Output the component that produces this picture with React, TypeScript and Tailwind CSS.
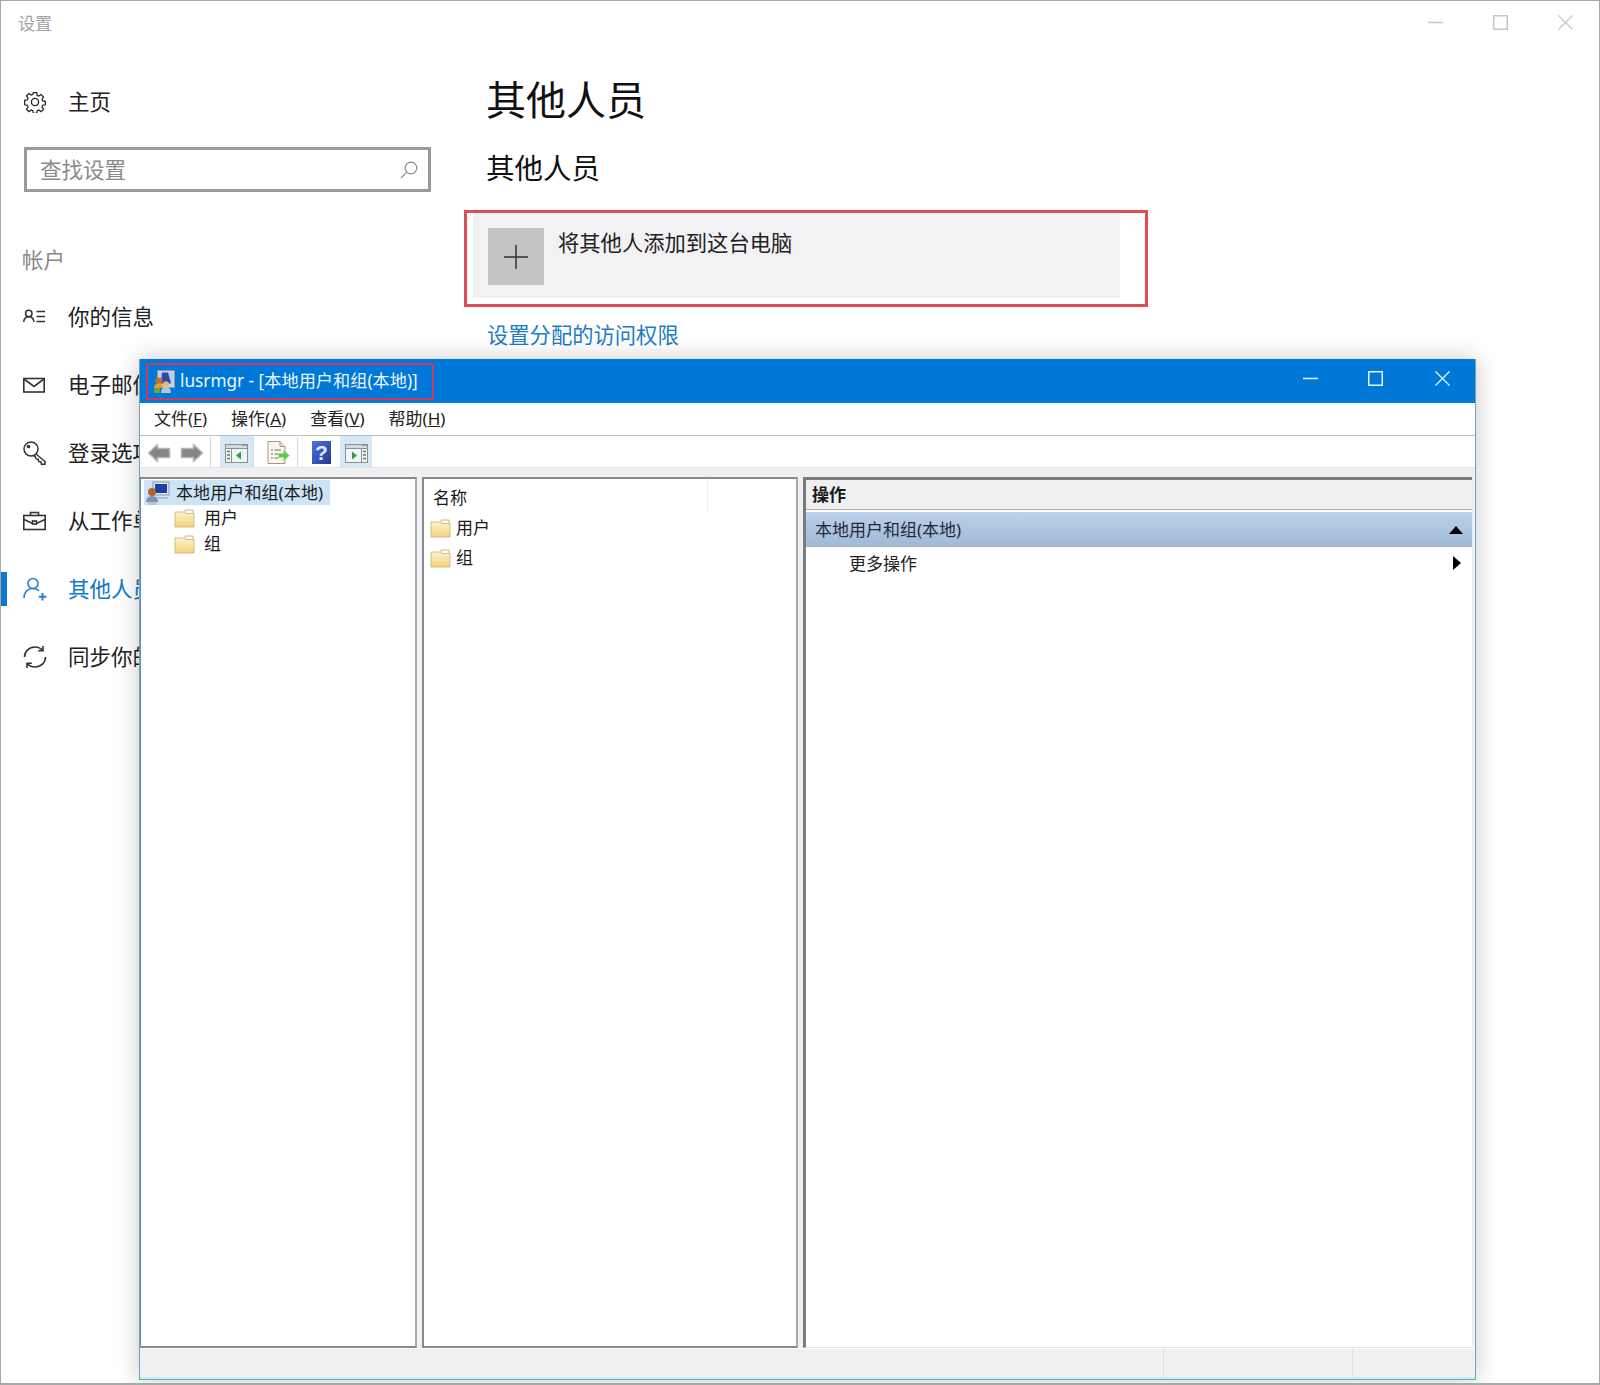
import React from "react";

const S = { fill: "none", stroke: "currentColor", strokeWidth: 1.5 } as const;

function Gear() {
  return (
    <svg width="22" height="22" viewBox="0 0 22 22" {...S} strokeWidth={1.3}>
      <circle cx="11" cy="11" r="3.6" />
      <path d="M9.2 1.2h3.6l.5 2.9 1.7.7 2.4-1.7 2.6 2.6-1.7 2.4.7 1.7 2.9.5v3.6l-2.9.5-.7 1.7 1.7 2.4-2.6 2.6-2.4-1.7-1.7.7-.5 2.9H9.2l-.5-2.9-1.7-.7-2.4 1.7-2.6-2.6 1.7-2.4-.7-1.7-2.9-.5V9.2l2.9-.5.7-1.7-1.7-2.4 2.6-2.6L7 3.700l1.700-.7z" transform="translate(0.55 0.55) scale(0.95)" />
    </svg>
  );
}
function PersonList() {
  return (
    <svg width="22" height="22" viewBox="0 0 22 22" {...S}>
      <circle cx="5.800" cy="7.500" r="3.200" />
      <path d="M.7 16c.3-3.600 2.300-5.300 5.100-5.300s4.800 1.700 5.100 5.300" />
      <path d="M13.500 5.500H22M13.500 10.500H22M13.500 15.500H22" />
    </svg>
  );
}
function Mail() {
  return (
    <svg width="22" height="22" viewBox="0 0 22 22" {...S} strokeWidth={1.6}>
      <rect x="0.800" y="4.500" width="20.400" height="13.500" />
      <path d="M1 5l10 7.500L21 5" />
    </svg>
  );
}
function Key() {
  return (
    <svg width="23" height="24" viewBox="0 0 23 24" {...S}>
      <circle cx="8" cy="8" r="7" />
      <circle cx="5.500" cy="5.500" r="1.100" />
      <path d="M13 13l9 7.500v2.700h-3.500l-.7-2.400-2.200-.3-.4-2.300-2.200-.3-1-2.700-1.500-.2" />
    </svg>
  );
}
function Briefcase() {
  return (
    <svg width="23" height="22" viewBox="0 0 23 22" {...S} strokeWidth={1.6}>
      <rect x="0.800" y="5.500" width="21.400" height="14" />
      <path d="M7.500 5.500V2.500h8v3M1 9.500l7.500 3.500h6L22 9.500" />
      <rect x="9.500" y="11" width="4" height="3" fill="#fff" />
    </svg>
  );
}
function PersonPlus() {
  return (
    <svg width="24" height="24" viewBox="0 0 24 24" {...S} strokeWidth={1.6}>
      <circle cx="10" cy="6.500" r="5" />
      <path d="M1 21c.3-6.200 3.800-9.500 9-9.500 2.500 0 4.500.8 6 2.200" />
      <path d="M19.500 16v7.500M15.800 19.700h7.500" strokeWidth={2} />
    </svg>
  );
}
function Sync() {
  return (
    <svg width="24" height="24" viewBox="0 0 24 24" {...S} strokeWidth={1.6}>
      <path d="M1.500 12C1.500 6.200 6.200 2 12 2c3 0 5.700 1.100 7.600 3.300" />
      <path d="M22.500 12c0 5.800-4.700 10-10.500 10-3 0-5.700-1.100-7.600-3.300" />
      <path d="M20 1v4.800h-4.800M4 23v-4.800h4.800" />
    </svg>
  );
}
function SearchIcon() {
  return (
    <svg width="18" height="18" viewBox="0 0 18 18" {...S} strokeWidth={1.2}>
      <circle cx="11" cy="7" r="5.800" />
      <path d="M6.800 11.200L1 17" />
    </svg>
  );
}
function Controls({ light }: { light: boolean }) {
  const c = light ? "text-[#e6f2fc]" : "text-[#c6c6c6]";
  return (
    <>
      <svg width="15" height="15" viewBox="0 0 15 15" className={c} {...S}>
        <path d="M0 7.500h15" />
      </svg>
      <svg width="15" height="15" viewBox="0 0 15 15" className={c} {...S}>
        <rect x="0.750" y="0.750" width="13.500" height="13.500" />
      </svg>
      <svg width="15" height="15" viewBox="0 0 15 15" className={light ? c + " ml-[2px]" : c} {...S} strokeWidth={1.3}>
        <path d="M0.500 0.500l14 14M14.500 0.500l-14 14" />
      </svg>
    </>
  );
}

function Folder() {
  return (
    <svg width="21" height="19" viewBox="0 0 21 19" className="shrink-0">
      <defs>
        <linearGradient id="fold" x1="0" y1="0" x2="0" y2="1">
          <stop offset="0" stopColor="#fdf3cf" />
          <stop offset="1" stopColor="#f3d27c" />
        </linearGradient>
      </defs>
      <path d="M11 1h8v5h-8z" fill="#fff" stroke="#b9a46c" strokeWidth="0.800" />
      <path d="M1 3h9.500L12 4.500h8V18H1z" fill="url(#fold)" stroke="#cdb06a" strokeWidth="0.800" />
    </svg>
  );
}
function TitleIcon() {
  return (
    <svg width="22" height="24" viewBox="0 0 22 24">
      <rect x="4.500" y="0.500" width="17" height="17" fill="#c9d4e4" stroke="#8e97a6" />
      <rect x="6.500" y="2.500" width="13" height="11" fill="#b9cbe6" />
      <path d="M9 2.500h6l3 11H8z" fill="#2c4cab" />
      <circle cx="6" cy="11" r="3.600" fill="#c66f2c" />
      <path d="M1 18c0-3 2-4.500 5-4.500s4 1.500 4 4.500z" fill="#d9a03a" />
      <circle cx="13" cy="14" r="2.800" fill="#e3b67a" />
      <path d="M8 23c0-4 2-6 5-6s5 2 5 6z" fill="#b9c3d2" />
      <path d="M1 18h6v5H1z" fill="#69a545" />
    </svg>
  );
}
function TreeIcon() {
  return (
    <svg width="24" height="24" viewBox="0 0 24 24" className="shrink-0">
      <rect x="7" y="1" width="16" height="13" fill="#dfe5ee" stroke="#8e97a6" />
      <rect x="9" y="3" width="12" height="9" fill="#1d3fa8" />
      <path d="M6 16h16v2H6z" fill="#b7bec9" />
      <circle cx="6" cy="11" r="4" fill="#b5652c" />
      <path d="M0 21c0-4 2.500-6 6-6s6 2 6 6z" fill="#7c93b3" />
      <path d="M2 21h9v3H2z" fill="#b7c2d2" />
    </svg>
  );
}
function Arrow({ flip }: { flip?: boolean }) {
  return (
    <svg width="24" height="20" viewBox="0 0 24 20" className={flip ? "-scale-x-100" : ""}>
      <path d="M1.500 10L10.500 1.500v4h12v9h-12v4z" fill="#858585" stroke="#b5b5b5" strokeWidth="1.600" strokeLinejoin="round" />
    </svg>
  );
}
function PaneIcon({ right }: { right?: boolean }) {
  return (
    <svg width="23" height="19" viewBox="0 0 23 19">
      <rect x="0.500" y="0.500" width="22" height="18" fill="#eef5f2" stroke="#8d9092" />
      <rect x="1" y="1" width="21" height="3.500" fill="#d5dadd" />
      <path d="M1 4.500h21" stroke="#8d9092" />
      <path d="M17.500 1.500h1.500M20 1.500h1.500" stroke="#777" strokeWidth="1" />
      {right ? (
        <>
          <path d="M16.500 5v13" stroke="#8d9092" />
          <path d="M18 7.500h3M18 11h3M18 14.500h3" stroke="#6f7477" strokeWidth="1.500" />
          <path d="M7 7.500l5 4-5 4z" fill="#2f9e44" />
        </>
      ) : (
        <>
          <path d="M6.500 5v13" stroke="#8d9092" />
          <path d="M2 7.500h3M2 11h3M2 14.500h3" stroke="#6f7477" strokeWidth="1.500" />
          <path d="M16 7.500l-5 4 5 4z" fill="#2f9e44" />
        </>
      )}
    </svg>
  );
}
function ExportIcon() {
  return (
    <svg width="23" height="23" viewBox="0 0 23 23">
      <path d="M1 .5h12l5 5v17H1z" fill="#fbf7ea" stroke="#a39a80" />
      <path d="M13 .5v5h5" fill="#e6dfc5" stroke="#a39a80" />
      <path d="M4 9h2M7.500 9H14M4 13h2M7.500 13H11M4 17h2M7.500 17H11" stroke="#6b6b6b" strokeWidth="1.200" />
      <path d="M11.500 12.500h5V9.500l6 5-6 5v-3h-5z" fill="#62c94e" stroke="#a3e08f" strokeWidth="0.600" />
    </svg>
  );
}
function HelpIcon() {
  return (
    <svg width="19" height="23" viewBox="0 0 19 23">
      <defs>
        <linearGradient id="hlp" x1="0" y1="0" x2="1" y2="1">
          <stop offset="0" stopColor="#4f74dc" />
          <stop offset="1" stopColor="#1f3690" />
        </linearGradient>
      </defs>
      <rect width="19" height="23" fill="url(#hlp)" />
      <text x="9.500" y="19" textAnchor="middle" fontSize="21" fontWeight="700" fill="#dfe6ff" fontFamily="Liberation Sans, sans-serif">?</text>
    </svg>
  );
}

const items: [React.ReactNode, string, boolean][] = [
  [<PersonList />, "你的信息", false],
  [<Mail />, "电子邮件和帐户", false],
  [<Key />, "登录选项", false],
  [<Briefcase />, "从工作单位或学校", false],
  [<PersonPlus />, "其他人员", true],
  [<Sync />, "同步你的设置", false],
];

function Sep() {
  return <div className="w-px h-[30px] bg-[#d8d8d8]" />;
}

export default function App() {
  return (
    <div className="relative w-[1600px] h-[1385px] overflow-hidden bg-white border border-b-2 border-[#a9a9a9] font-['Noto_Sans','Noto_Sans_CJK_SC',sans-serif] text-[#1a1a1a]">
      {/* Settings title bar */}
      <div className="h-[45px] flex items-center pl-[17px]">
        <span className="text-[17px] text-[#a3a3a3]">设置</span>
        <div className="ml-auto mr-[26px] mb-[2px] flex items-center gap-[50px]">
          <Controls light={false} />
        </div>
      </div>

      <div className="flex">
        {/* Sidebar */}
        <aside className="w-[456px] shrink-0">
          <div className="mt-[22px] h-[68px] flex items-center pl-[23px] gap-[22px] text-[21.500px] text-[#222]">
            <Gear />
            <span>主页</span>
          </div>
          <div className="mt-[11px] ml-[23px] w-[407px] h-[45px] border-[3px] border-[#9a9a9a] flex items-center pl-[13px] pr-[10px] justify-between text-[#8a8a8a]">
            <span className="text-[21.500px] leading-none">查找设置</span>
            <span className="text-[#8c8c8c] flex"><SearchIcon /></span>
          </div>
          <div className="mt-[53px] pl-[21px] h-[30px] flex items-center text-[21.500px] text-[#8a8a8a]">帐户</div>
          <nav className="mt-[8px]">
            {items.map(([icon, label, active]) => (
              <div key={label} className={"h-[68px] flex items-center text-[21.500px] " + (active ? "text-[#0f78c8]" : "text-[#222]")}>
                <div className={"w-[6px] h-[34px] " + (active ? "bg-[#0c78cf]" : "")} />
                <div className={"w-[24px] flex justify-start ml-[16px] " + (active ? "text-[#2f7fc4]" : "text-[#333]")}>{icon}</div>
                <span className="ml-[21px] whitespace-nowrap">{label}</span>
              </div>
            ))}
          </nav>
        </aside>

        {/* Main */}
        <main className="pl-[7px] flex-1">
          <h1 className="mt-[26px] ml-[22px] h-[56px] leading-[56px] text-[40px] text-[#111]">其他人员</h1>
          <h2 className="mt-[20px] ml-[22px] h-[40px] leading-[40px] text-[28.500px] text-[#111]">其他人员</h2>
          <div className="mt-[22px] w-[684px] h-[97px] border-[3px] border-[#e04f55]">
            <div className="ml-[6px] w-[647px] h-[85px] bg-[#f2f1f4] flex pl-[15px] pt-[15px]">
              <div className="w-[56px] h-[57px] bg-[#c4c3c6] flex items-center justify-center text-[#333]">
                <svg width="24" height="24" viewBox="0 0 24 24" fill="none" stroke="currentColor" strokeWidth="1.500">
                  <path d="M12 0v24M0 12h24" />
                </svg>
              </div>
              <span className="ml-[14px] text-[21.300px] leading-[30px] text-[#222]">将其他人添加到这台电脑</span>
            </div>
          </div>
          <a className="mt-[13px] ml-[23px] h-[30px] leading-[30px] block text-[21.300px] text-[#1b7cc9]">设置分配的访问权限</a>
        </main>
      </div>

      {/* lusrmgr window */}
      <div className="absolute left-[138px] top-[358px] w-[1337px] h-[1021px] flex flex-col bg-[#f0eff2] border border-t-0 border-[#6fa3b5] shadow-[0_0_22px_rgba(0,0,0,0.22)]">
        <div className="h-[44px] shrink-0 bg-[#0078d7] flex items-start text-white">
          <div className="ml-[6px] mt-[4px] w-[288px] h-[37px] border-2 border-[#c93a5c] flex items-center pl-[5px] gap-[5px]">
            <TitleIcon />
            <span className="text-[17.200px] leading-none pb-[2px] text-[#eef6fd] whitespace-nowrap">lusrmgr - [本地用户和组(本地)]</span>
          </div>
          <div className="ml-auto mr-[25px] mt-[12px] flex items-center gap-[50px]">
            <Controls light={true} />
          </div>
        </div>

        <div className="h-[33px] shrink-0 bg-white border-b border-[#bcbcbc] flex items-center pl-[14px] gap-[24px] text-[17px] text-[#222]">
          <span>文件(<u>F</u>)</span>
          <span>操作(<u>A</u>)</span>
          <span>查看(<u>V</u>)</span>
          <span>帮助(<u>H</u>)</span>
        </div>

        <div className="h-[32px] shrink-0 bg-white border-b border-[#e4e4e6] flex items-center pl-[7px]">
          <div className="pt-[3px]"><Arrow /></div>
          <div className="ml-[9px] pt-[3px]"><Arrow flip /></div>
          <div className="ml-[6px]"><Sep /></div>
          <div className="ml-[9px] w-[33px] h-[31px] bg-[#d6e7f8] flex items-center justify-center pt-[3px]"><PaneIcon /></div>
          <Sep />
          <div className="ml-[13px] pt-[2px]"><ExportIcon /></div>
          <div className="ml-[7px]"><Sep /></div>
          <div className="ml-[14px] pt-px"><HelpIcon /></div>
          <div className="ml-[9px] w-[32px] h-[31px] bg-[#d6e7f8] flex items-center justify-center pt-[3px]"><PaneIcon right /></div>
        </div>

        <div className="flex-1 min-h-0 flex pt-[9px] pr-[3px] gap-[5px]">
          <div className="w-[277px] bg-white border-t-2 border-r-2 border-b-2 border-l border-t-[#8a8a8a] border-r-[#a8a8ae] border-b-[#8a8a8a] border-l-[#5f94b8] pl-[3px] pt-px">
            <div className="w-[186px] h-[25px] bg-[#cde4f7] flex items-center gap-[6px] pl-[2px]">
              <TreeIcon />
              <span className="text-[17px] tracking-[0.1px] whitespace-nowrap leading-none">本地用户和组(本地)</span>
            </div>
            <div className="pl-[30px] flex items-center gap-[9px] h-[26px] text-[17px]"><Folder /><span>用户</span></div>
            <div className="pl-[30px] flex items-center gap-[9px] h-[26px] text-[17px]"><Folder /><span>组</span></div>
          </div>

          <div className="w-[376px] bg-white border-t-2 border-r-2 border-b-2 border-l-2 border-t-[#8a8a8a] border-r-[#a8a8ae] border-b-[#8a8a8a] border-l-[#8a8a8a]">
            <div className="h-[33px] flex">
              <div className="w-[284px] border-r border-[#f1f1f1] pl-[9px] pt-[4px] flex items-center text-[17px]">名称</div>
            </div>
            <div className="pl-[6px] mt-px flex items-center gap-[5px] h-[30px] text-[17px]"><Folder /><span>用户</span></div>
            <div className="pl-[6px] flex items-center gap-[5px] h-[30px] text-[17px]"><Folder /><span>组</span></div>
          </div>

          <div className="flex-1 bg-white border-t-[3px] border-l-[3px] border-b border-[#7b7b7b] border-b-[#e4e4e6]">
            <div className="h-[30px] bg-[#f0eff2] border-b border-[#a9a9a9] pl-[6px] pt-px flex items-center text-[17px] font-bold">操作</div>
            <div className="mt-[2px] h-[35px] bg-gradient-to-b from-[#bdd2ea] to-[#a0b8d6] pl-[9px] pr-[9px] flex items-center justify-between text-[17px] text-[#1f2a3a]">
              <span>本地用户和组(本地)</span>
              <svg width="14" height="8" viewBox="0 0 14 8"><path d="M0 8L7 0l7 8z" fill="#000" /></svg>
            </div>
            <div className="h-[33px] pl-[43px] pr-[11px] flex items-center justify-between text-[17px] text-[#222]">
              <span>更多操作</span>
              <svg width="8" height="14" viewBox="0 0 8 14" className="-mt-[2px]"><path d="M0 0l8 7-8 7z" fill="#000" /></svg>
            </div>
          </div>
        </div>

        <div className="h-[31px] shrink-0 border-t border-white border-b-2 border-b-[#cdeef6] bg-[#f0eff2] flex justify-end">
          <div className="w-[189px] border-l border-[#dddddf]" />
          <div className="w-[123px] border-l border-[#dddddf]" />
        </div>
      </div>
    </div>
  );
}
